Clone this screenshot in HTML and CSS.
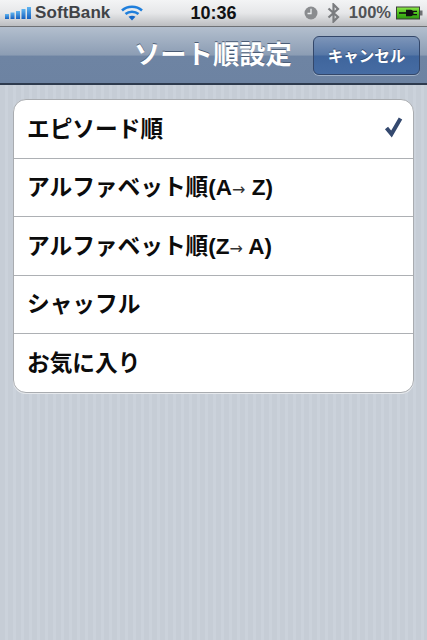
FILE: index.html
```html
<!DOCTYPE html>
<html lang="ja">
<head>
<meta charset="utf-8">
<title>ソート順設定</title>
<link rel="stylesheet" href="styles.css">
</head>
<body>
<div class="screen">
  <div class="status">
    <div class="status-left">
      <svg class="signal" width="32" height="14" viewBox="0 0 32 14">
        <defs><linearGradient id="sg" x1="0" y1="0" x2="0" y2="1"><stop offset="0" stop-color="#5fb4f0"/><stop offset="1" stop-color="#1560c0"/></linearGradient></defs>
        <rect x="5" y="8" width="4" height="5" fill="url(#sg)"/>
        <rect x="10.500" y="6.500" width="4" height="6.500" fill="url(#sg)"/>
        <rect x="16" y="5" width="4" height="8" fill="url(#sg)"/>
        <rect x="21.500" y="3" width="4" height="10" fill="url(#sg)"/>
        <rect x="27" y="1" width="4" height="12" fill="url(#sg)"/>
      </svg>
      <span class="carrier">SoftBank</span>
      <svg class="wifi" width="22" height="16" viewBox="0 0 22 16">
        <path d="M1 5.500 C6.500 0.500 15.500 0.500 21 5.500" fill="none" stroke="#1f7fdc" stroke-width="2.600"/>
        <path d="M4.500 9 C8 6 14 6 17.500 9" fill="none" stroke="#1f7fdc" stroke-width="2.600"/>
        <path d="M11 15.500 L7.500 11.800 C9.500 10.300 12.500 10.300 14.500 11.800 Z" fill="#1568c8"/>
      </svg>
    </div>
    <span class="time">10:36</span>
    <div class="status-right">
      <svg class="clock" width="14" height="14" viewBox="0 0 14 14">
        <circle cx="7" cy="7" r="6.500" fill="#8a8c8f"/>
        <path d="M7 2.800 V7.500 H3.500" fill="none" stroke="#eceef0" stroke-width="1.300"/>
      </svg>
      <svg class="bt" width="13" height="20" viewBox="0 0 13 20">
        <path d="M1.500 5.500 L11 14 L6.500 18.500 V1.500 L11 6 L1.500 14.500" fill="none" stroke="#7a7c7f" stroke-width="2.200"/>
      </svg>
      <span class="percent">100%</span>
      <svg class="battery" width="27" height="14" viewBox="0 0 27 14">
        <defs><linearGradient id="bg" x1="0" y1="0" x2="0" y2="1"><stop offset="0" stop-color="#8fe84a"/><stop offset="0.500" stop-color="#4cc01c"/><stop offset="1" stop-color="#2e9a10"/></linearGradient></defs>
        <rect x="0.500" y="1" width="23" height="12" fill="url(#bg)" stroke="#3a3d3a"/>
        <rect x="24" y="4.500" width="2.500" height="5" fill="#6e7073"/>
        <path d="M3 7 H10" stroke="#111" stroke-width="1.600"/>
        <path d="M10 3.800 H14.500 C16.800 3.800 17.500 5.500 17.500 7 C17.500 8.500 16.800 10.200 14.500 10.200 H10 Z" fill="#111"/>
        <path d="M17 5.400 H21 M17 8.600 H21" stroke="#111" stroke-width="1.200"/>
      </svg>
    </div>
  </div>
  <header class="navbar">
    <h1 class="nav-title">ソート順設定</h1>
    <button class="cancel" type="button">キャンセル</button>
  </header>
  <main class="content">
    <ul class="group">
      <li class="row">
        <span>エピソード順</span>
        <svg class="check" width="20" height="22" viewBox="0 0 20 22">
          <path d="M2.500 12 L7.500 18 L16.500 2.500" fill="none" stroke="#34496f" stroke-width="4"/>
        </svg>
      </li>
      <li class="row"><span>アルファベット順<span class="latin">(A<span class="arrow">→</span> Z)</span></span></li>
      <li class="row"><span>アルファベット順<span class="latin">(Z<span class="arrow">→</span> A)</span></span></li>
      <li class="row"><span>シャッフル</span></li>
      <li class="row"><span>お気に入り</span></li>
    </ul>
  </main>
</div>
</body>
</html>
```

FILE: styles.css
```css
* { box-sizing: border-box; }
html, body { margin: 0; padding: 0; }
body { width: 427px; height: 640px; overflow: hidden; font-family: "Liberation Sans", "Noto Sans CJK JP", sans-serif; }
.screen { width: 427px; height: 640px; display: flex; flex-direction: column; }

.status {
  height: 27px;
  flex: none;
  display: flex;
  align-items: center;
  justify-content: space-between;
  padding: 0 4px 1px 0;
  background: linear-gradient(#f3f4f5 0%, #e6e7e9 50%, #bcbec1 100%);
  border-bottom: 1px solid #6f7276;
  position: relative;
}
.status-left, .status-right { display: flex; align-items: center; }
.signal { margin-right: 3px; }
.carrier { font-size: 17px; font-weight: bold; color: #404347; letter-spacing: 0.1px; }
.wifi { margin-left: 11px; }
.time {
  position: absolute;
  left: 0; right: 0; top: 3px;
  text-align: center;
  font-size: 18px;
  font-weight: bold;
  color: #101214;
}
.clock { margin-right: 9px; }
.bt { margin-right: 9px; }
.percent { font-size: 16.500px; font-weight: bold; color: #505357; margin-right: 5px; }

.navbar {
  height: 58px;
  flex: none;
  display: flex;
  align-items: center;
  justify-content: flex-end;
  padding: 0 7px 0 0;
  background: linear-gradient(#b3bfce 0%, #8c9db4 50%, #6e84a3 52%, #6d83a2 100%);
  border-bottom: 2px solid #2e3b4e;
  position: relative;
}
.nav-title {
  position: absolute;
  left: 134px;
  top: 11px;
  margin: 0;
  font-size: 26.300px;
  line-height: 34px;
  font-weight: bold;
  color: #fff;
  text-shadow: 0 -1px 0 #4b5c75;
  white-space: nowrap;
}
.cancel {
  width: 107px;
  height: 39px;
  margin-top: 0;
  padding: 0;
  border: 1px solid #33476a;
  border-radius: 6px;
  background: linear-gradient(#7d95b9 0%, #5677a6 49%, #3f659c 51%, #466ca3 100%);
  color: #fff;
  font-family: inherit;
  font-size: 15.500px;
  font-weight: bold;
  text-shadow: 0 -1px 0 #33476a;
  box-shadow: 0 1px 0 #9fb0c6;
}

.content {
  flex: 1;
  padding: 14px 13px 0 13px;
  background: repeating-linear-gradient(90deg, #c6cdd6 0, #c6cdd6 5px, #cbd2db 5px, #cbd2db 8px);
}
.group {
  list-style: none;
  margin: 0;
  padding: 0;
  background: #fff;
  border: 1px solid #a9acb0;
  border-radius: 13px;
  overflow: hidden;
  box-shadow: 0 1px 0 #e6e9ed;
}
.row {
  height: 58.500px;
  display: flex;
  align-items: center;
  justify-content: space-between;
  padding: 0 9px 3px 13px;
  border-bottom: 1px solid #adb0b4;
  font-size: 22.700px;
  font-weight: bold;
  color: #0c0c0c;
  white-space: nowrap;
}
.latin { font-size: 22.500px; }
.arrow { font-family: "DejaVu Sans", sans-serif; font-size: 16px; font-weight: normal; color: #333; line-height: 1; }
.row:last-child { border-bottom: 0; height: 57.500px; }
```
